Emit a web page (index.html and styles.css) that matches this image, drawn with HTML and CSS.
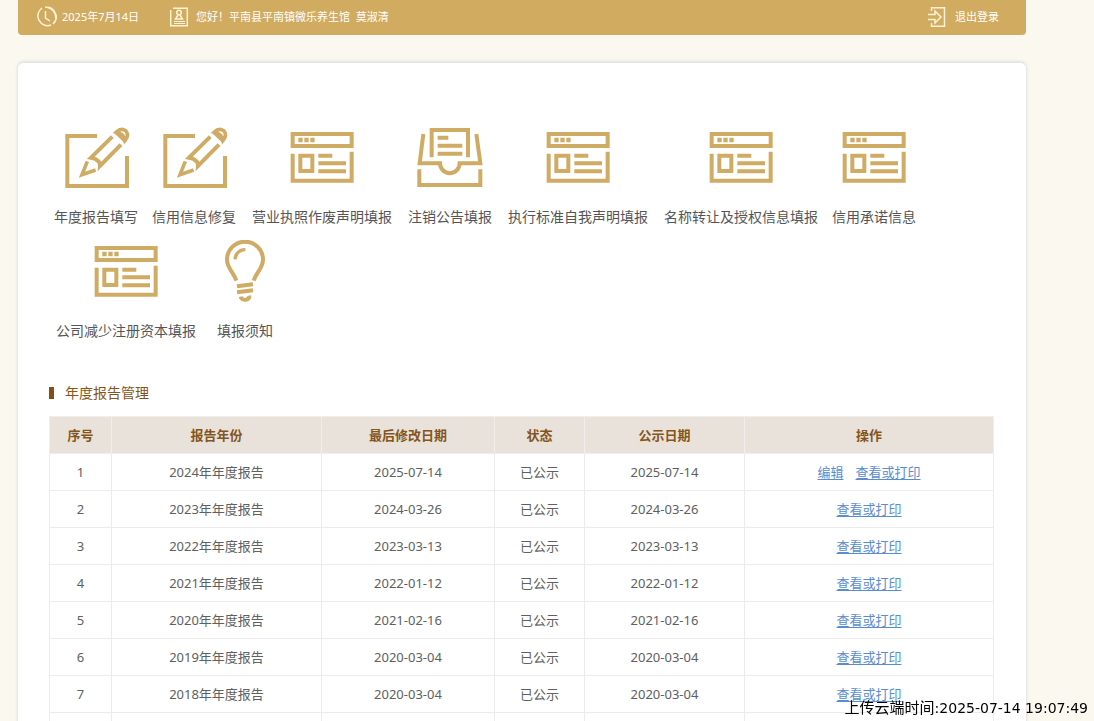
FILE: index.html
```
<!DOCTYPE html>
<html lang="zh-CN">
<head>
<meta charset="utf-8">
<title>年度报告管理</title>
<link rel="stylesheet" href="styles.css">
</head>
<body>
<svg class="defs" aria-hidden="true">
  <symbol id="edit" viewBox="66 48 204 192">
    <path d="M171 78H82V228H261V138"/>
    <path d="M217 80L153 143Q170 146 171 151Q181 156 180 168L243 104"/>
    <path d="M142 154L126 194L167 180" stroke-width="11"/>
    <path d="M229 66Q243 52 257 62Q269 76 255 92Q250 70 229 66Z" stroke-width="11"/>
    <path d="M227 67L254 92" stroke-width="10"/>
  </symbol>
  <symbol id="window" viewBox="0 48 204 192">
    <path d="M14 72H191V108H14ZM14 131V212H191V125"/>
    <path d="M31 90H44M49 90H62M67 90H80" stroke-width="13"/>
    <path d="M37 137H73V183H37Z"/>
    <path d="M91 137H133M91 160H174M91 184H174"/>
  </symbol>
  <symbol id="inbox" viewBox="140 48 204 192">
    <path d="M187 142V60H296V142"/>
    <path d="M205 83H237M205 107H279M205 131H279"/>
    <path d="M162 72L151 160H212A29 29 0 0 0 271 160H333L321 72"/>
    <path d="M150 178V225H333V178"/>
  </symbol>
  <symbol id="bulb" viewBox="513 30 204 192">
    <path d="M589 152C582 128 561 114 561 89A54 54 0 0 1 669 89C669 114 648 128 641 152"/>
    <path d="M585 88A30 30 0 0 1 616 59" stroke-width="10"/>
    <path d="M591 169L639 163M591 187L639 181"/>
    <path d="M602 200A13 11 0 0 0 628 197"/>
  </symbol>
</svg>

<header class="topbar">
  <span class="top-item date">
    <svg class="top-icon" viewBox="0 0 22 22"><path d="M7 2A9.7 9.7 0 0 0 16 19M18 18A9.7 9.7 0 0 0 10 1.3M12 1.4A9.7 9.7 0 0 1 20.6 12M10.5 5V12L15 15"/></svg>
    <time datetime="2025-07-14">2025年7月14日</time>
  </span>
  <span class="top-item user">
    <svg class="top-icon" viewBox="0 0 22 22"><path d="M2.7 4V19.7H19.3V2.3H5"/><path d="M6 17.5H17M6 15.5H17" stroke-width="1"/><circle cx="11" cy="6.5" r="2.3"/><path d="M10 9L7.5 13H14.5L12 9"/></svg>
    <span>您好！平南县平南镇微乐养生馆&nbsp; 莫淑清</span>
  </span>
  <a class="top-item logout" href="#">
    <svg class="top-icon" viewBox="0 0 22 22"><path d="M5.5 5V1.7H18.5V20.3H5.5V17"/><path d="M2 8.5H9V5L15 11L9 17V13.5H2"/></svg>
    <span>退出登录</span>
  </a>
</header>

<main class="panel">
  <nav class="menu">
    <a class="entry six" href="#"><svg class="icon"><use href="#edit"/></svg><span>年度报告填写</span></a>
    <a class="entry six" href="#"><svg class="icon"><use href="#edit"/></svg><span>信用信息修复</span></a>
    <a class="entry ten" href="#"><svg class="icon"><use href="#window"/></svg><span>营业执照作废声明填报</span></a>
    <a class="entry six" href="#"><svg class="icon"><use href="#inbox"/></svg><span>注销公告填报</span></a>
    <a class="entry ten" href="#"><svg class="icon"><use href="#window"/></svg><span>执行标准自我声明填报</span></a>
    <a class="entry eleven" href="#"><svg class="icon"><use href="#window"/></svg><span>名称转让及授权信息填报</span></a>
    <a class="entry six" href="#"><svg class="icon"><use href="#window"/></svg><span>信用承诺信息</span></a>
    <a class="entry ten" href="#"><svg class="icon"><use href="#window"/></svg><span>公司减少注册资本填报</span></a>
    <a class="entry four" href="#"><svg class="icon"><use href="#bulb"/></svg><span>填报须知</span></a>
  </nav>

  <h2 class="title">年度报告管理</h2>
  <table class="reports">
    <colgroup><col class="c-no"><col class="c-year"><col class="c-mod"><col class="c-state"><col class="c-pub"><col></colgroup>
    <thead>
      <tr><th>序号</th><th>报告年份</th><th>最后修改日期</th><th>状态</th><th>公示日期</th><th>操作</th></tr>
    </thead>
    <tbody>
      <tr><td>1</td><td>2024年年度报告</td><td>2025-07-14</td><td>已公示</td><td>2025-07-14</td><td><a href="#">编辑</a><a href="#">查看或打印</a></td></tr>
      <tr><td>2</td><td>2023年年度报告</td><td>2024-03-26</td><td>已公示</td><td>2024-03-26</td><td><a href="#">查看或打印</a></td></tr>
      <tr><td>3</td><td>2022年年度报告</td><td>2023-03-13</td><td>已公示</td><td>2023-03-13</td><td><a href="#">查看或打印</a></td></tr>
      <tr><td>4</td><td>2021年年度报告</td><td>2022-01-12</td><td>已公示</td><td>2022-01-12</td><td><a href="#">查看或打印</a></td></tr>
      <tr><td>5</td><td>2020年年度报告</td><td>2021-02-16</td><td>已公示</td><td>2021-02-16</td><td><a href="#">查看或打印</a></td></tr>
      <tr><td>6</td><td>2019年年度报告</td><td>2020-03-04</td><td>已公示</td><td>2020-03-04</td><td><a href="#">查看或打印</a></td></tr>
      <tr><td>7</td><td>2018年年度报告</td><td>2020-03-04</td><td>已公示</td><td>2020-03-04</td><td><a href="#">查看或打印</a></td></tr>
      <tr><td></td><td></td><td></td><td></td><td></td><td></td></tr>
    </tbody>
  </table>
</main>

<div class="stamp">上传云端时间<span class="stamp-time">:2025-07-14 19:07:49</span></div>
</body>
</html>
```

FILE: styles.css
```
* { box-sizing: border-box; }
body {
  margin: 0;
  padding: 0 68px 0 18px;
  height: 100vh;
  overflow: hidden;
  background: #fbf8ef;
  color: #606060;
  font: 13px/20px "Noto Sans", "Noto Sans CJK SC", sans-serif;
}
.defs { position: absolute; width: 0; height: 0; }
svg, symbol { fill: none; }

.topbar {
  display: flex;
  align-items: center;
  height: 35px;
  padding: 0 27px 1px 17px;
  background: #d1ab60;
  border-radius: 0 0 4px 4px;
  color: #fff;
  font-size: 11px;
}
.top-item { display: flex; align-items: center; gap: 5px; }
.user { margin-left: 29px; gap: 6px; }
.logout { margin-left: auto; gap: 7px; color: #fff; text-decoration: none; }
.top-icon { width: 22px; height: 22px; stroke: #fff3d6; stroke-width: 1.5; }

.panel {
  margin-top: 27px;
  padding: 63px 32px 0 31px;
  background: #fff;
  border-top: 1px solid #e2e5e4;
  border-radius: 6px;
  box-shadow: 0 0 3px 1px #dfe2e2;
}
.menu { display: flex; flex-wrap: wrap; margin-left: -2px; }
.entry {
  display: flex;
  flex-direction: column;
  align-items: center;
  gap: 17px;
  height: 114px;
  color: #555;
  font-size: 14px;
  text-decoration: none;
  white-space: nowrap;
}
.four { width: 80px; }
.six { width: 98px; }
.ten { width: 158px; }
.eleven { width: 168px; }
.icon { width: 68px; height: 64px; stroke: #d0ab64; stroke-width: 12; }

.title {
  display: flex;
  align-items: center;
  gap: 11px;
  margin: 29px 0 13px;
  color: #84551a;
  font-size: 14px;
  font-weight: 400;
  line-height: 20px;
}
.title::before { content: ""; width: 5px; height: 12px; background: #84500f; }

.reports { width: 100%; border-collapse: collapse; table-layout: fixed; text-align: center; }
.c-no { width: 62px; }
.c-year { width: 210px; }
.c-mod { width: 173px; }
.c-state { width: 90px; }
.c-pub { width: 160px; }
.reports th, .reports td { height: 37px; padding: 0; border: 1px solid #ececec; }
.reports th { background: #e9e2db; color: #84551a; font-weight: 700; border-color: #f1ede9; }
.reports a { color: #5a8dcf; text-underline-offset: 2px; }
.reports a + a { margin-left: 12px; }

.stamp {
  position: fixed;
  right: 6px;
  bottom: 3px;
  color: #000;
  font-size: 15px;
}
.stamp-time { font: 14px/20px "DejaVu Sans", sans-serif; }
```
